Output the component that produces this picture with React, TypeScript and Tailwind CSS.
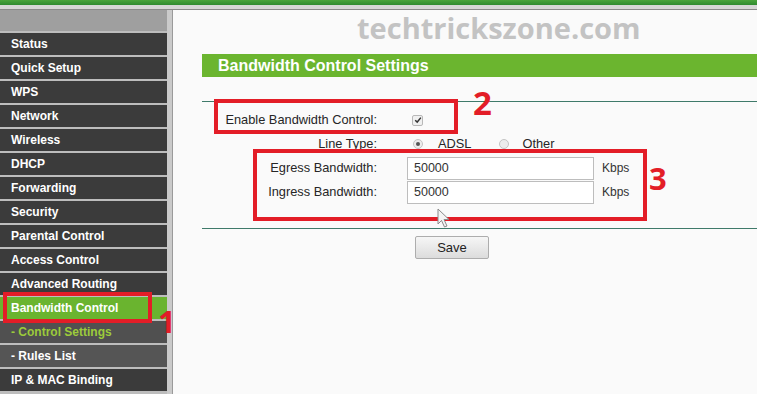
import React from "react";

/* Router admin page: Bandwidth Control Settings (annotated screenshot) */

const MENU = [
  { label: "Status" },
  { label: "Quick Setup" },
  { label: "WPS" },
  { label: "Network" },
  { label: "Wireless" },
  { label: "DHCP" },
  { label: "Forwarding" },
  { label: "Security" },
  { label: "Parental Control" },
  { label: "Access Control" },
  { label: "Advanced Routing" },
  { label: "Bandwidth Control", active: true },
  { label: "- Control Settings", sub: true, current: true },
  { label: "- Rules List", sub: true },
  { label: "IP & MAC Binding" },
];

function Sidebar() {
  return (
    <div className="flex w-[167px] flex-col gap-[2px] bg-[#bdbdbd]">
      <div className="h-[21px] bg-[#9f9f9f]" />
      {MENU.map((item) => (
        <div
          key={item.label}
          className={`flex h-[22px] shrink-0 items-center pl-[11px] text-[12px] font-bold ${
            item.active
              ? "bg-[#6ab42f] text-white"
              : item.sub
              ? item.current
                ? "bg-[#505050] text-[#9ccb3b]"
                : "bg-[#555555] text-white"
              : "bg-[#3b3b3b] text-white"
          }`}
        >
          {item.label}
        </div>
      ))}
    </div>
  );
}

function Radio({ checked }: { checked?: boolean }) {
  return (
    <span className="flex h-[10px] w-[10px] items-center justify-center rounded-full border border-[#c4c4c4] bg-[#ececec]">
      {checked && <span className="h-[4px] w-[4px] rounded-full bg-[#555]" />}
    </span>
  );
}

function FormRow({ label, children }: { label: string; children: React.ReactNode }) {
  return (
    <div className="flex h-[24px] items-center">
      <div className="w-[175px] text-right text-[12.8px] text-[#262626]">{label}</div>
      <div className="ml-[30px] flex items-center">{children}</div>
    </div>
  );
}

export default function App() {
  return (
    <div
      className="relative flex h-[394px] w-[757px] flex-col overflow-hidden bg-[#fafafa]"
      style={{ fontFamily: '"Liberation Sans", Arial, sans-serif' }}
    >
      <div className="h-[5px] bg-gradient-to-b from-[#4aa43c] to-[#2f8a2f]" />
      <div className="h-[4px] bg-[#d6d6d6]" />
      <div className="h-px bg-[#8a8a8a]" />

      <div className="flex flex-1">
        <Sidebar />
        <div className="w-[6px] border-r border-[#9a9a9a] bg-[#cacaca]" />

        <main className="flex flex-1 flex-col">
          <div className="h-[44px] pt-[2px] pl-[184px]">
            <span
              className="text-[29px] font-bold leading-[32px] text-[#c3c3c3]"
              style={{ fontFamily: '"Open Sans", sans-serif' }}
            >
              techtrickszone.com
            </span>
          </div>

          <div className="ml-[29px] h-[23px] bg-[#6bb52f] pl-[16px] text-[16px] font-bold leading-[23px] text-white">
            Bandwidth Control Settings
          </div>

          <div className="ml-[29px] mt-[24px] h-px bg-[#3f7a6a]" />

          <div className="ml-[29px] flex flex-col pt-[6px]">
            <FormRow label="Enable Bandwidth Control:">
              <span className="ml-[5px] flex h-[11px] w-[11px] items-center justify-center rounded-[2px] border border-[#b8b8b8] bg-[#f0f0f0]">
                <svg viewBox="0 0 10 10" className="h-[8px] w-[8px]">
                  <path d="M1.5 5.2 L4 7.6 L8.6 2" fill="none" stroke="#333" strokeWidth="1.8" />
                </svg>
              </span>
            </FormRow>
            <FormRow label="Line Type:">
              <span className="ml-[6px]">
                <Radio checked />
              </span>
              <span className="ml-[15px] text-[12.8px] text-[#262626]">ADSL</span>
              <span className="ml-[28px]">
                <Radio />
              </span>
              <span className="ml-[13px] text-[12.8px] text-[#262626]">Other</span>
            </FormRow>
            <FormRow label="Egress Bandwidth:">
              <div className="h-[23px] w-[187px] border border-[#bdbdbd] bg-white pl-[6px] text-[12.5px] leading-[21px] text-[#333]">
                50000
              </div>
              <span className="ml-[8px] text-[12px] text-[#333]">Kbps</span>
            </FormRow>
            <FormRow label="Ingress Bandwidth:">
              <div className="h-[23px] w-[187px] border border-[#bdbdbd] bg-white pl-[6px] text-[12.5px] leading-[21px] text-[#333]">
                50000
              </div>
              <span className="ml-[8px] text-[12px] text-[#333]">Kbps</span>
            </FormRow>
          </div>

          <div className="ml-[29px] mt-[24px] h-px bg-[#3f7a6a]" />

          <div className="ml-[242px] mt-[6px]">
            <button className="h-[23px] w-[74px] rounded-[2px] border border-[#adadad] bg-gradient-to-b from-[#f6f6f6] to-[#dcdcdc] text-[13px] text-[#222]">
              Save
            </button>
          </div>
        </main>
      </div>

      {/* annotation boxes */}
      <div className="absolute left-[3px] top-[292px] h-[31px] w-[149px] border-[4px] border-[#e31d27]" />
      <div className="absolute left-[214px] top-[99px] h-[35px] w-[244px] border-[4px] border-[#e31d27]" />
      <div className="absolute left-[253px] top-[149px] h-[72px] w-[394px] border-[4px] border-[#e31d27]" />

      <span
        className="absolute left-[158px] top-[306px] text-[31px] font-bold leading-none text-[#e31d27]"
        style={{ fontFamily: '"Open Sans", sans-serif' }}
      >
        1
      </span>
      <span
        className="absolute left-[473px] top-[86px] text-[33px] font-bold leading-none text-[#e31d27]"
        style={{ fontFamily: '"Open Sans", sans-serif' }}
      >
        2
      </span>
      <span
        className="absolute left-[649px] top-[163px] text-[31px] font-bold leading-none text-[#e31d27]"
        style={{ fontFamily: '"Open Sans", sans-serif' }}
      >
        3
      </span>

      {/* mouse pointer */}
      <svg className="absolute left-[437px] top-[208px]" width="16" height="22" viewBox="0 0 16 22">
        <path
          d="M1 1 L1 16 L4.5 12.5 L7.5 19 L10 18 L7 11.5 L12 11.5 Z"
          fill="#f4f4f4"
          stroke="#8a8a8a"
          strokeWidth="1"
        />
      </svg>
    </div>
  );
}
